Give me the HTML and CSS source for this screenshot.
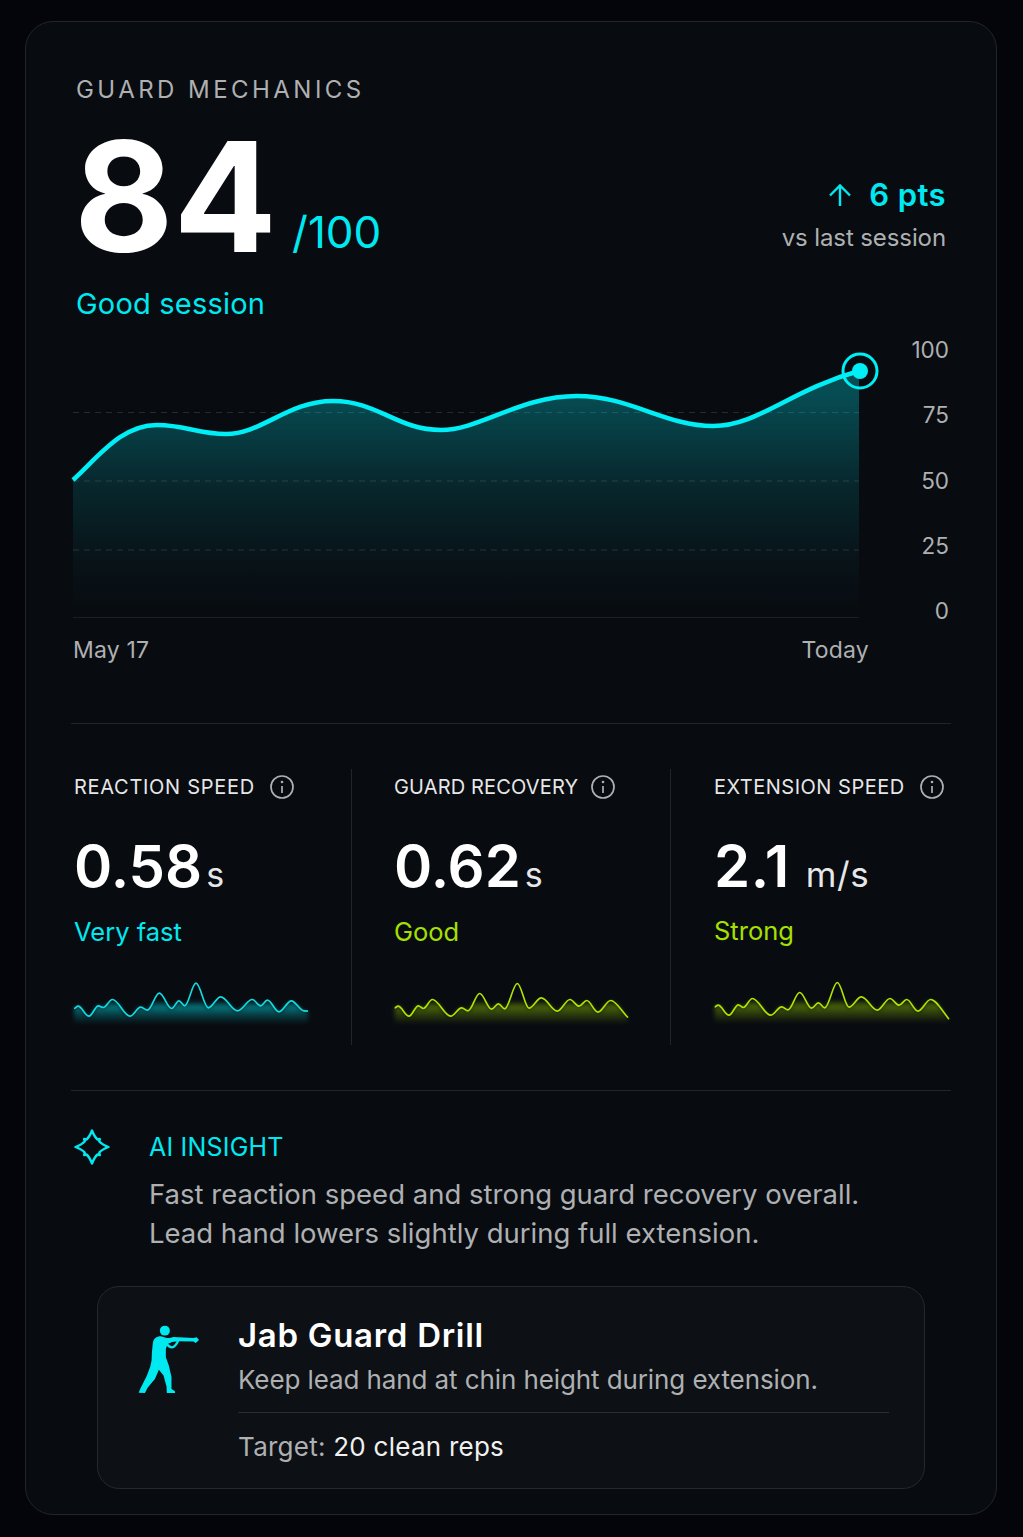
FILE: index.html
```html
<!DOCTYPE html>
<html lang="en">
<head>
  <meta charset="UTF-8" />
  <title>Guard Mechanics</title>
  <link rel="stylesheet" href="styles.css">
</head>
<body>
  <div class="card">
    <div class="head">
      <div>
        <div class="title">GUARD MECHANICS</div>
        <div class="score-row">
          <span class="score">84</span>
          <span class="score-max">/100</span>
        </div>
        <div class="score-note">Good session</div>
      </div>
      <div class="delta">
        <div class="delta-pts">
          <svg class="delta-arrow" viewBox="0 0 24 24"><path d="M12 23V3M2 12.500L12 2.500L22 12.500"/></svg>
          <span>6 pts</span>
        </div>
        <div class="delta-note">vs last session</div>
      </div>
    </div>

    <div class="chart-row">
      <svg class="chart" viewBox="73 338 803 285">
        <defs>
          <linearGradient id="area" x1="0" y1="395" x2="0" y2="617" gradientUnits="userSpaceOnUse">
            <stop offset="0" stop-color="#00e5ee" stop-opacity=".3"/>
            <stop offset=".4" stop-color="#00e5ee" stop-opacity=".13"/>
            <stop offset=".75" stop-color="#00e5ee" stop-opacity=".035"/>
            <stop offset="1" stop-color="#00e5ee" stop-opacity="0"/>
          </linearGradient>
        </defs>
        <line class="grid" x1="73" y1="412.500" x2="859" y2="412.500"/>
        <path fill="url(#area)" d="M73 480 C100 455 122 425 157 425 C185 425 198 434 226 434 C262 434 288 401 333 401 C378 401 397 430 441 430 C480 430 520 396 577 396 C630 396 665 426 713 426 C758 426 790 390 859 371 L859 617 L73 617 Z"/>
        <line class="grid" x1="73" y1="481" x2="859" y2="481"/>
        <line class="grid" x1="73" y1="550" x2="859" y2="550"/>
        <line class="base" x1="73" y1="617.500" x2="859" y2="617.500"/>
        <path class="trend" d="M73 480 C100 455 122 425 157 425 C185 425 198 434 226 434 C262 434 288 401 333 401 C378 401 397 430 441 430 C480 430 520 396 577 396 C630 396 665 426 713 426 C758 426 790 390 859 371"/>
        <circle class="ring" cx="860" cy="371" r="17"/>
        <circle class="dot" cx="860" cy="371" r="8"/>
      </svg>
      <div class="y-axis">
        <span>100</span><span>75</span><span>50</span><span>25</span><span>0</span>
      </div>
    </div>
    <div class="x-axis"><span>May 17</span><span>Today</span></div>

    <div class="stats">
      <div class="stat stat-first">
        <div class="stat-label">REACTION SPEED
          <svg class="info" viewBox="0 0 24 24"><circle cx="12" cy="12" r="11"/><path d="M12 11v7"/><circle class="info-dot" cx="12" cy="7" r="1.300"/></svg>
        </div>
        <div class="stat-value">0.58<span class="unit">s</span></div>
        <div class="stat-note cyan">Very fast</div>
        <svg class="spark" viewBox="40 660 705 140">
          <defs>
            <linearGradient id="glow-c" x1="0" y1="722" x2="0" y2="792" gradientUnits="userSpaceOnUse">
              <stop offset="0" stop-color="#00e5ee" stop-opacity="0"/>
              <stop offset=".25" stop-color="#00e5ee" stop-opacity=".5"/>
              <stop offset=".55" stop-color="#00e5ee" stop-opacity=".26"/>
              <stop offset="1" stop-color="#00e5ee" stop-opacity="0"/>
            </linearGradient>
            <filter id="soft"><feGaussianBlur stdDeviation="6"/></filter>
          </defs>
          <path fill="url(#glow-c)" filter="url(#soft)" d="M40 745 C44 745 48 738 52 738 C64 738 73 768 85 768 C95 768 103 737 113 737 C118 737 123 742 128 742 C137 742 146 718 155 718 C174 718 189 768 208 768 C219 768 229 741 240 741 C247 741 253 750 260 750 C273 750 283 699 296 699 C309 699 320 745 333 745 C341 745 347 722 355 722 C361 722 366 737 372 737 C384 737 394 669 406 669 C419 669 430 743 443 743 C456 743 467 710 480 710 C498 710 512 752 530 752 C546 752 559 718 575 718 C584 718 591 737 600 737 C607 737 613 720 620 720 C632 720 643 755 655 755 C668 755 679 722 692 722 C705 722 717 752 730 752 L742 753 L742 800 L40 800 Z"/>
          <path class="spark-line line-cyan" d="M40 745 C44 745 48 738 52 738 C64 738 73 768 85 768 C95 768 103 737 113 737 C118 737 123 742 128 742 C137 742 146 718 155 718 C174 718 189 768 208 768 C219 768 229 741 240 741 C247 741 253 750 260 750 C273 750 283 699 296 699 C309 699 320 745 333 745 C341 745 347 722 355 722 C361 722 366 737 372 737 C384 737 394 669 406 669 C419 669 430 743 443 743 C456 743 467 710 480 710 C498 710 512 752 530 752 C546 752 559 718 575 718 C584 718 591 737 600 737 C607 737 613 720 620 720 C632 720 643 755 655 755 C668 755 679 722 692 722 C705 722 717 752 730 752 L742 753"/>
        </svg>
      </div>

      <div class="stat">
        <div class="stat-label label-tight">GUARD RECOVERY
          <svg class="info" viewBox="0 0 24 24"><circle cx="12" cy="12" r="11"/><path d="M12 11v7"/><circle class="info-dot" cx="12" cy="7" r="1.300"/></svg>
        </div>
        <div class="stat-value">0.62<span class="unit">s</span></div>
        <div class="stat-note lime">Good</div>
        <svg class="spark" viewBox="40 60 705 140">
          <defs>
            <linearGradient id="glow-l" x1="0" y1="122" x2="0" y2="192" gradientUnits="userSpaceOnUse">
              <stop offset="0" stop-color="#a6e000" stop-opacity="0"/>
              <stop offset=".25" stop-color="#a6e000" stop-opacity=".42"/>
              <stop offset=".55" stop-color="#a6e000" stop-opacity=".24"/>
              <stop offset="1" stop-color="#a6e000" stop-opacity="0"/>
            </linearGradient>
          </defs>
          <path fill="url(#glow-l)" filter="url(#soft)" d="M42 143 C46 143 48 138 52 138 C64 138 73 168 85 168 C95 168 103 137 113 137 C118 137 123 145 128 145 C137 145 146 118 155 118 C174 118 191 168 210 168 C222 168 231 143 243 143 C250 143 255 152 262 152 C274 152 285 100 297 100 C310 100 320 147 333 147 C340 147 346 131 353 131 C360 131 365 146 372 146 C385 146 397 70 410 70 C422 70 433 144 445 144 C458 144 469 113 482 113 C499 113 513 153 530 153 C543 153 555 118 568 118 C577 118 586 138 595 138 C603 138 610 121 618 121 C630 121 640 156 652 156 C665 156 677 121 690 121 C706 121 722 152 742 172 L742 200 L42 200 Z"/>
          <path class="spark-line line-lime" d="M42 143 C46 143 48 138 52 138 C64 138 73 168 85 168 C95 168 103 137 113 137 C118 137 123 145 128 145 C137 145 146 118 155 118 C174 118 191 168 210 168 C222 168 231 143 243 143 C250 143 255 152 262 152 C274 152 285 100 297 100 C310 100 320 147 333 147 C340 147 346 131 353 131 C360 131 365 146 372 146 C385 146 397 70 410 70 C422 70 433 144 445 144 C458 144 469 113 482 113 C499 113 513 153 530 153 C543 153 555 118 568 118 C577 118 586 138 595 138 C603 138 610 121 618 121 C630 121 640 156 652 156 C665 156 677 121 690 121 C706 121 722 152 742 172"/>
        </svg>
      </div>

      <div class="stat stat-last">
        <div class="stat-label label-ext">EXTENSION SPEED
          <svg class="info" viewBox="0 0 24 24"><circle cx="12" cy="12" r="11"/><path d="M12 11v7"/><circle class="info-dot" cx="12" cy="7" r="1.300"/></svg>
        </div>
        <div class="stat-value value-wide">2.1<span class="unit unit-wide">m/s</span></div>
        <div class="stat-note lime">Strong</div>
        <svg class="spark" viewBox="40 60 705 140">
          <path fill="url(#glow-l)" filter="url(#soft)" d="M42 143 C46 143 48 138 52 138 C64 138 73 168 85 168 C95 168 103 137 113 137 C118 137 123 145 128 145 C137 145 146 118 155 118 C174 118 191 168 210 168 C222 168 231 143 243 143 C250 143 255 152 262 152 C274 152 285 100 297 100 C310 100 320 147 333 147 C340 147 346 131 353 131 C360 131 365 146 372 146 C385 146 397 70 410 70 C422 70 433 144 445 144 C458 144 469 113 482 113 C499 113 513 153 530 153 C543 153 555 118 568 118 C577 118 586 138 595 138 C603 138 610 121 618 121 C630 121 640 156 652 156 C665 156 677 121 690 121 C706 121 722 152 745 180 L745 200 L42 200 Z"/>
          <path class="spark-line line-lime" d="M42 143 C46 143 48 138 52 138 C64 138 73 168 85 168 C95 168 103 137 113 137 C118 137 123 145 128 145 C137 145 146 118 155 118 C174 118 191 168 210 168 C222 168 231 143 243 143 C250 143 255 152 262 152 C274 152 285 100 297 100 C310 100 320 147 333 147 C340 147 346 131 353 131 C360 131 365 146 372 146 C385 146 397 70 410 70 C422 70 433 144 445 144 C458 144 469 113 482 113 C499 113 513 153 530 153 C543 153 555 118 568 118 C577 118 586 138 595 138 C603 138 610 121 618 121 C630 121 640 156 652 156 C665 156 677 121 690 121 C706 121 722 152 745 180"/>
        </svg>
      </div>
    </div>

    <div class="insight">
      <svg class="insight-icon" viewBox="-18 -18 36 36"><path d="M0 -16.500 Q2.500 -10 5.500 -7.500 L7.800 -8 L7.300 -5.500 Q10 -2.500 16.500 0 Q10 2.500 7.300 5.500 L7.800 8 L5.500 7.500 Q2.500 10 0 16.500 Q-2.500 10 -5.500 7.500 L-7.800 8 L-7.300 5.500 Q-10 2.500 -16.500 0 Q-10 -2.500 -7.300 -5.500 L-7.800 -8 L-5.500 -7.500 Q-2.500 -10 0 -16.500 Z"/></svg>
      <div>
        <div class="insight-title">AI INSIGHT</div>
        <p class="insight-text">Fast reaction speed and strong guard recovery overall.<br>Lead hand lowers slightly during full extension.</p>
      </div>
    </div>

    <div class="drill">
      <svg class="boxer" viewBox="140 130 200 220">
        <circle cx="226" cy="150" r="15"/>
        <path d="M214 167 C200 167 192 174 190 186 L187 215 L186 240 L182 258 L172 285 L152 325 L147 337 L166 338 L174 322 L196 296 L208 268 L222 285 L231 318 L232 338 L257 338 L256 332 L246 326 L246 290 L238 255 L229 230 L229 205 L234 190 L248 184 L265 182 L312 183 L319 187 L329 178 L322 170 L312 172 L268 170 L252 169 L240 172 L232 172 Z"/>
        <path class="boxer-arm" d="M230 188 Q240 202 250 200 Q260 196 268 176"/>
      </svg>
      <div class="drill-body">
        <div class="drill-title">Jab Guard Drill</div>
        <div class="drill-text">Keep lead hand at chin height during extension.</div>
        <div class="drill-target"><span class="target-label">Target:</span> 20 clean reps</div>
      </div>
    </div>
  </div>
</body>
</html>
```

FILE: styles.css
```css
* { box-sizing: border-box; }
body { margin: 0; padding: 21px 26px 22px 25px; background: #03050a; font-family: Inter, sans-serif; color: #fff; }

.card { height: 1494px; padding: 53px 45px 0; background: #080b10; border: 1px solid #22252a; border-radius: 28px; }

.head { display: flex; justify-content: space-between; padding: 0 5px; height: 263px; }
.title { font-size: 24px; line-height: 30px; letter-spacing: 3.450px; color: #aeb0b2; }
.score-row { display: flex; align-items: flex-end; height: 158px; }
.score { font-size: 153px; line-height: 132px; font-weight: 700; margin-left: -2px; }
.score-max { font-size: 44px; line-height: 48px; color: #00e8f0; margin-left: 15px; margin-bottom: 7px; }
.score-note { font-size: 29px; line-height: 34px; letter-spacing: .2px; color: #00e8f0; margin-top: 24px; }

.delta { text-align: right; padding-top: 100px; }
.delta-pts { display: flex; justify-content: flex-end; align-items: center; gap: 17px; font-size: 31px; line-height: 40px; font-weight: 600; color: #00e8f0; letter-spacing: .4px; }
.delta-arrow { width: 24px; height: 24px; fill: none; stroke: #00e8f0; stroke-width: 2.400; }
.delta-note { font-size: 24px; line-height: 30px; letter-spacing: -.1px; color: #aeb0b2; margin-top: 8px; }

.chart-row { display: flex; margin-left: 2px; height: 285px; }
.chart { width: 803px; height: 285px; overflow: visible; flex: none; }
.grid { stroke: #fff; stroke-opacity: .13; stroke-width: 1; stroke-dasharray: 6 5; }
.base { stroke: #fff; stroke-opacity: .08; stroke-width: 1; }
.trend { fill: none; stroke: #00eef5; stroke-width: 4.500; }
.ring { fill: none; stroke: #00eef5; stroke-width: 3; }
.dot { fill: #00eef5; }
.y-axis { flex: 1; display: flex; flex-direction: column; justify-content: space-between; text-align: right; font-size: 22.500px; line-height: 24px; color: #aeb0b2; padding-right: 2px; }

.x-axis { display: flex; justify-content: space-between; width: 796px; margin-left: 2px; margin-top: 14px; font-size: 23px; line-height: 26px; letter-spacing: .2px; color: #aeb0b2; }

.stats { display: flex; margin-top: 60px; padding: 45px 0; height: 368px; border-top: 1px solid #22252a; border-bottom: 1px solid #22252a; }
.stat { width: 319px; padding-left: 42px; border-right: 1px solid #22252a; }
.stat-first { width: 281px; padding-left: 3px; }
.stat-last { width: 280px; padding-left: 43px; border-right: 0; }
.stat-label { display: flex; align-items: center; gap: 15px; font-size: 20px; line-height: 36px; letter-spacing: .7px; color: #e6e7e8; white-space: nowrap; }
.label-tight { letter-spacing: .15px; gap: 13px; }
.label-ext { letter-spacing: .5px; }
.info { width: 24px; height: 24px; fill: none; stroke: #aeb0b2; stroke-width: 1.700; flex: none; }
.info-dot { fill: #aeb0b2; stroke: none; }
.stat-value { font-size: 58px; line-height: 70px; font-weight: 600; margin-top: 26px; }
.value-wide { letter-spacing: .6px; }
.unit { font-size: 34px; font-weight: 400; margin-left: 4px; color: #e6e7e8; }
.unit-wide { font-size: 35px; margin-left: 16px; }
.stat-note { font-size: 25.500px; line-height: 34px; margin-top: 5px; }
.cyan { color: #00e8f0; }
.lime { color: #a6e000; }
.spark { display: block; width: 235px; height: 47px; margin-top: 31px; overflow: visible; }
.spark-line { fill: none; stroke-width: 5; }
.line-cyan { stroke: #12dbe2; }
.line-lime { stroke: #b0e400; }

.insight { display: flex; padding: 38px 0 0 3px; }
.insight-icon { width: 36px; height: 36px; fill: none; stroke: #00e8f0; stroke-width: 2.400; stroke-linejoin: round; flex: none; margin-right: 39px; }
.insight-title { font-size: 25px; line-height: 36px; letter-spacing: .2px; color: #00e8f0; }
.insight-text { margin: 10px 0 0; font-size: 27.500px; line-height: 39px; color: #aeb0b2; }

.drill { display: flex; margin: 33px 26px 0; height: 203px; padding: 29px 35px 0 39px; background: #0d1014; border: 1px solid #25282d; border-radius: 22px; }
.boxer { width: 67px; height: 73px; fill: #00e8f0; flex: none; margin-top: 8px; margin-right: 35px; margin-left: -1px; }
.boxer-arm { fill: none; stroke: #00e8f0; stroke-width: 7; }
.drill-body { flex: 1; }
.drill-title { font-size: 33px; line-height: 38px; font-weight: 600; letter-spacing: .7px; }
.drill-text { font-size: 26px; line-height: 34px; letter-spacing: -.1px; color: #aeb0b2; margin-top: 9px; padding-bottom: 15px; border-bottom: 1px solid #2a2d31; }
.drill-target { font-size: 26px; line-height: 34px; letter-spacing: .25px; margin-top: 17px; color: #f0f0f0; }
.target-label { color: #aeb0b2; }
```
